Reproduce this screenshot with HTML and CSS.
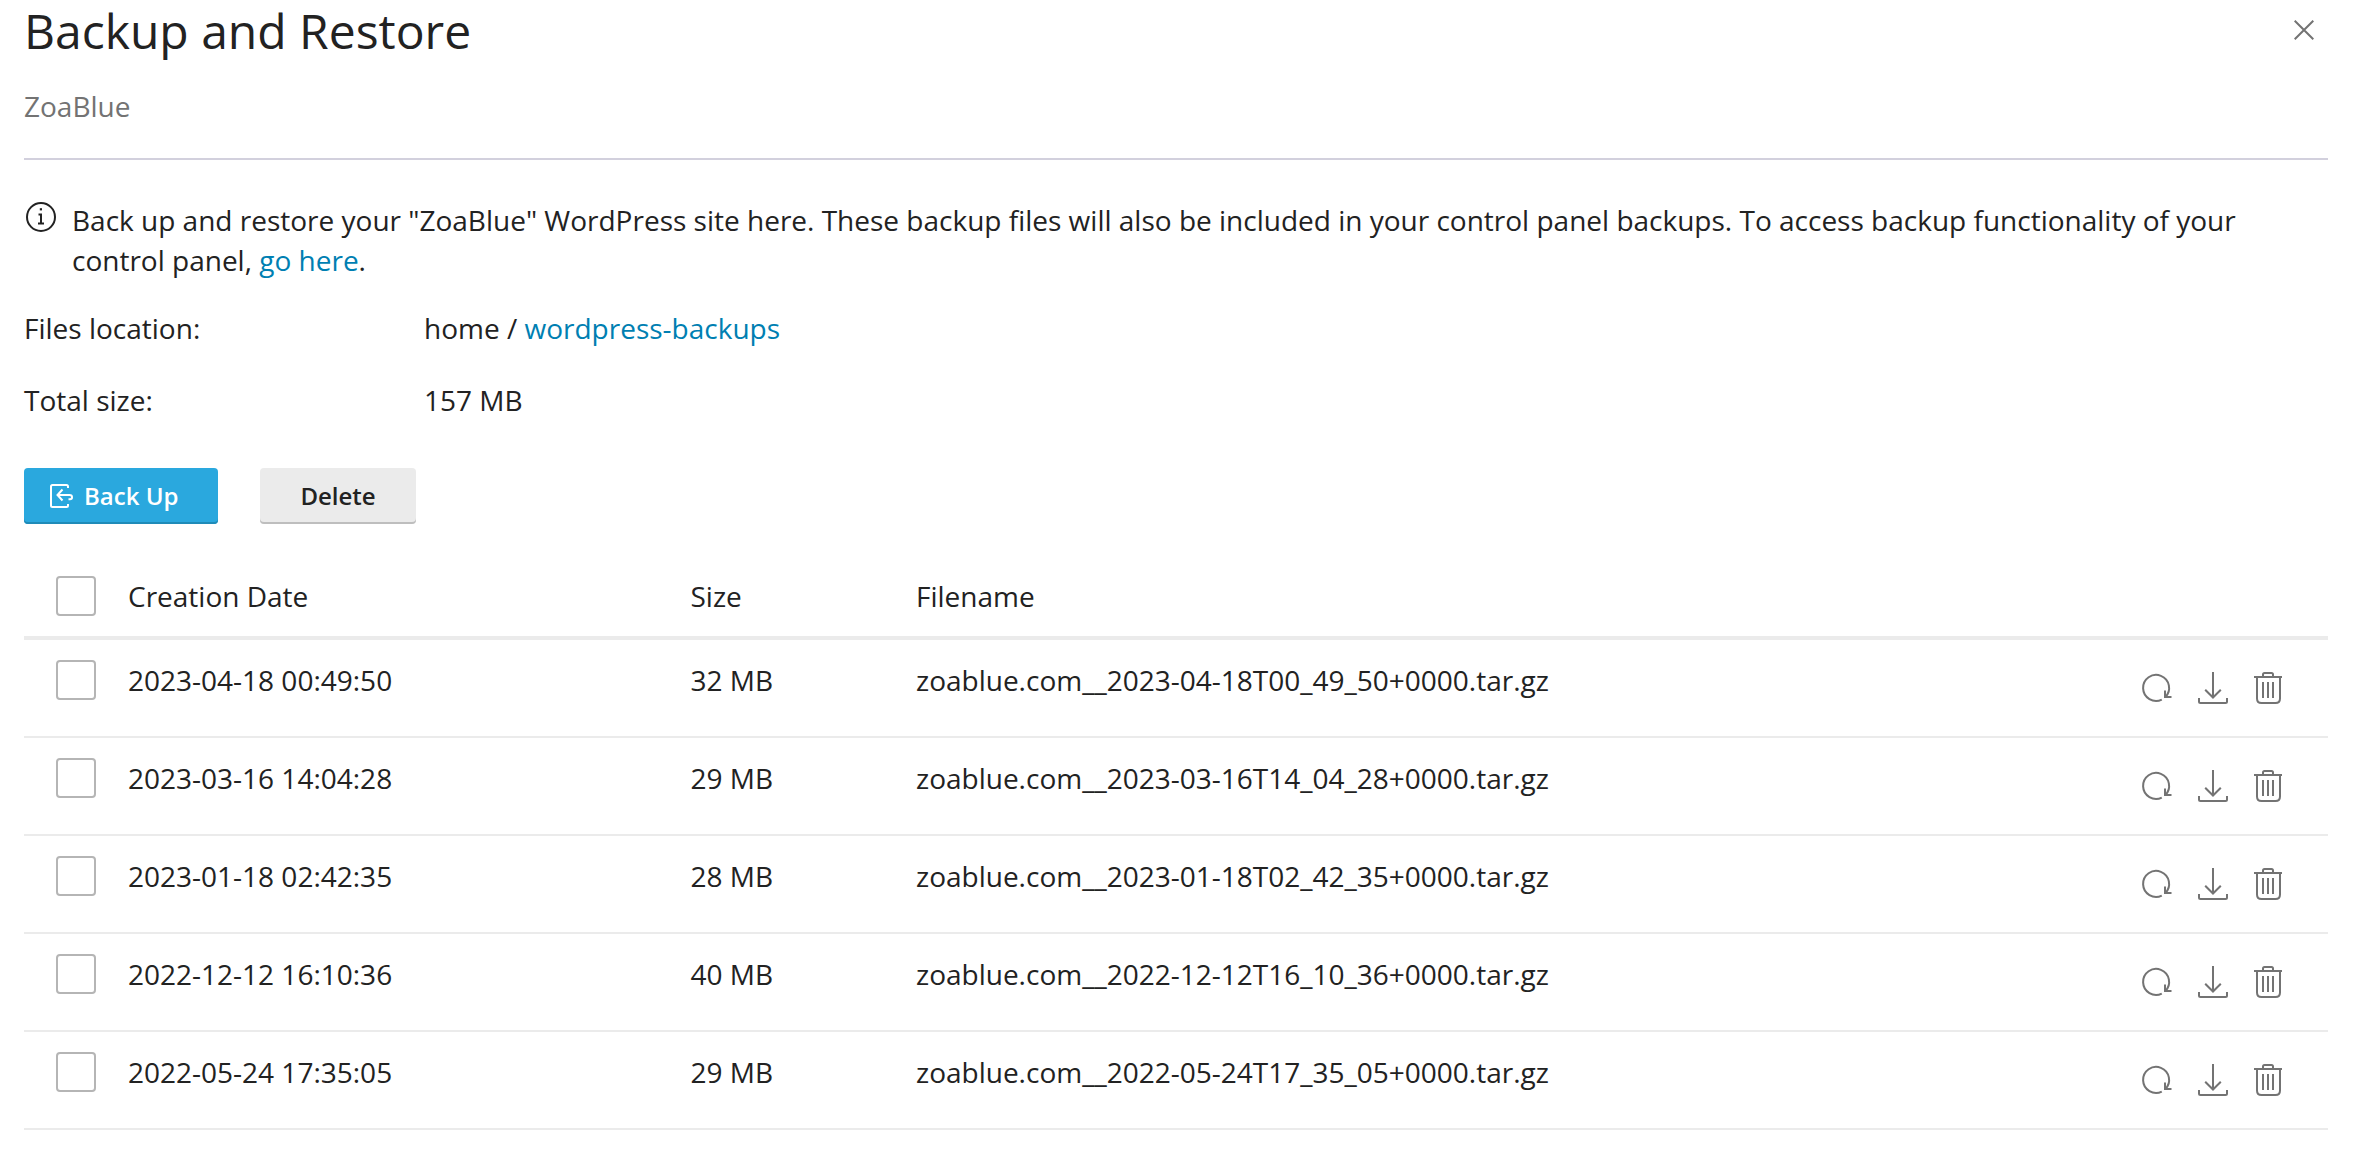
FILE: index.html
```html
<!DOCTYPE html>
<html lang="en">
<head>
<meta charset="utf-8">
<title>Backup and Restore</title>
<link rel="stylesheet" href="styles.css">
</head>
<body>
<svg class="sprite" aria-hidden="true">
  <symbol id="restore" viewBox="0 0 32 32"><path d="M21.800 27.600A13 13 0 1 1 25.200 25.200M25 18.500V25H31.500"/></symbol>
  <symbol id="download" viewBox="0 0 32 32"><path d="M17 0V25.500M9.200 17.700L17 25.500L24.800 17.700M3 26V29.500Q3 31 4.500 31H29.500Q31 31 31 29.500V26"/></symbol>
  <symbol id="trash" viewBox="0 0 32 32"><path d="M2 5H30M11 5V2.500Q11 1 12.500 1H19.500Q21 1 21 2.500V5M5 5V26.500Q5 31 9.500 31H23.500Q28 31 28 26.500V5M11 10V26M16 10V26M21 10V26"/></symbol>
</svg>
<main class="drawer">
  <header class="head">
    <div>
      <h1 class="title">Backup and Restore</h1>
      <p class="subtitle">ZoaBlue</p>
    </div>
    <svg class="close" viewBox="0 0 20 20"><path d="M.7.700L19.300 19.300M19.300.700L.7 19.300"/></svg>
  </header>
  <div class="hint">
    <svg class="info" viewBox="0 0 32 32"><circle cx="17" cy="16" r="14"/><path d="M14.500 13.500H17V22.500M14 22.500H20"/><rect x="15.800" y="7.200" width="2.200" height="2.200"/></svg>
    <p class="hint-text">Back up and restore your "ZoaBlue" WordPress site here. These backup files will also be included in your control panel backups. To access backup functionality of your control panel, <a class="link">go here</a>.</p>
  </div>
  <dl class="facts">
    <dt>Files location:</dt><dd>home / <a class="link">wordpress-backups</a></dd>
    <dt>Total size:</dt><dd>157 MB</dd>
  </dl>
  <div class="toolbar">
    <button class="btn btn-primary"><svg class="btn-icon" viewBox="0 0 24 24"><path d="M18 4V2.500Q18 1 16.500 1H2.500Q1 1 1 2.500V21.500Q1 23 2.500 23H16.500Q18 23 18 21.500V20M12.500 5.500L7.500 11L12.500 16.500M7.500 11H19.500Q22 11 22 13V13.500Q22 15.300 20 15.300H18.500"/></svg>Back Up</button>
    <button class="btn">Delete</button>
  </div>
  <div class="table">
    <div class="row row-head"><span class="box"></span><span>Creation Date</span><span>Size</span><span>Filename</span></div>
    <div class="row"><span class="box"></span><span>2023-04-18 00:49:50</span><span>32 MB</span><span>zoablue.com__2023-04-18T00_49_50+0000.tar.gz</span><span class="actions"><svg><use href="#restore"/></svg><svg><use href="#download"/></svg><svg><use href="#trash"/></svg></span></div>
    <div class="row"><span class="box"></span><span>2023-03-16 14:04:28</span><span>29 MB</span><span>zoablue.com__2023-03-16T14_04_28+0000.tar.gz</span><span class="actions"><svg><use href="#restore"/></svg><svg><use href="#download"/></svg><svg><use href="#trash"/></svg></span></div>
    <div class="row"><span class="box"></span><span>2023-01-18 02:42:35</span><span>28 MB</span><span>zoablue.com__2023-01-18T02_42_35+0000.tar.gz</span><span class="actions"><svg><use href="#restore"/></svg><svg><use href="#download"/></svg><svg><use href="#trash"/></svg></span></div>
    <div class="row"><span class="box"></span><span>2022-12-12 16:10:36</span><span>40 MB</span><span>zoablue.com__2022-12-12T16_10_36+0000.tar.gz</span><span class="actions"><svg><use href="#restore"/></svg><svg><use href="#download"/></svg><svg><use href="#trash"/></svg></span></div>
    <div class="row"><span class="box"></span><span>2022-05-24 17:35:05</span><span>29 MB</span><span>zoablue.com__2022-05-24T17_35_05+0000.tar.gz</span><span class="actions"><svg><use href="#restore"/></svg><svg><use href="#download"/></svg><svg><use href="#trash"/></svg></span></div>
  </div>
</main>
</body>
</html>
```
FILE: styles.css
```css
* { box-sizing: border-box; }
body, h1, p, dl, dd { margin: 0; }
body {
  background: #fff;
  color: #222;
  font: 28px/40px "Open Sans", "Noto Sans", sans-serif;
}
svg { display: block; fill: none; stroke: #737373; stroke-width: 2; }
.sprite { display: none; }
.drawer { padding: 0 28px 0 24px; }
.head {
  display: flex;
  justify-content: space-between;
  height: 160px;
  border-bottom: 2px solid #d2d0dd;
}
.title { font-size: 48px; line-height: 62px; font-weight: 400; }
.subtitle { margin-top: 24px; color: #737373; }
.close { width: 20px; height: 20px; margin: 20px 14px 0 0; }
.hint { display: flex; gap: 16px; padding-top: 40px; }
.info { width: 32px; height: 32px; flex: none; margin-top: 1px; stroke: #222; }
.info rect { fill: #222; stroke: none; }
.link { color: #007fb2; }
.facts {
  display: grid;
  grid-template-columns: 400px 1fr;
  row-gap: 32px;
  margin-top: 28px;
}
.toolbar { display: flex; gap: 42px; margin-top: 48px; }
.btn {
  display: flex;
  align-items: center;
  height: 56px;
  padding: 0 40px;
  border: 0;
  border-radius: 4px;
  background: #ebebeb;
  box-shadow: inset 0 -2px #bebebe;
  color: #222;
  font: 600 24px/56px "Open Sans", "Noto Sans", sans-serif;
}
.btn-primary {
  gap: 10px;
  padding: 0 40px 0 26px;
  background: #2aa8de;
  box-shadow: inset 0 -2px #1f8bb8;
  color: #fff;
}
.btn-icon { width: 24px; height: 24px; stroke: #fff; }
.table { margin-top: 32px; }
.row {
  display: grid;
  grid-template-columns: 72px 562.5px 225.5px 1fr auto;
  height: 98px;
  padding: 20px 44px 0 32px;
  border-bottom: 2px solid #ebebeb;
}
.row-head { height: 84px; border-bottom-width: 4px; }
.box { width: 40px; height: 40px; border: 2px solid #b5b5b5; border-radius: 4px; }
.actions { display: flex; gap: 24px; padding-top: 12px; }
.actions svg { width: 32px; height: 32px; }
```
